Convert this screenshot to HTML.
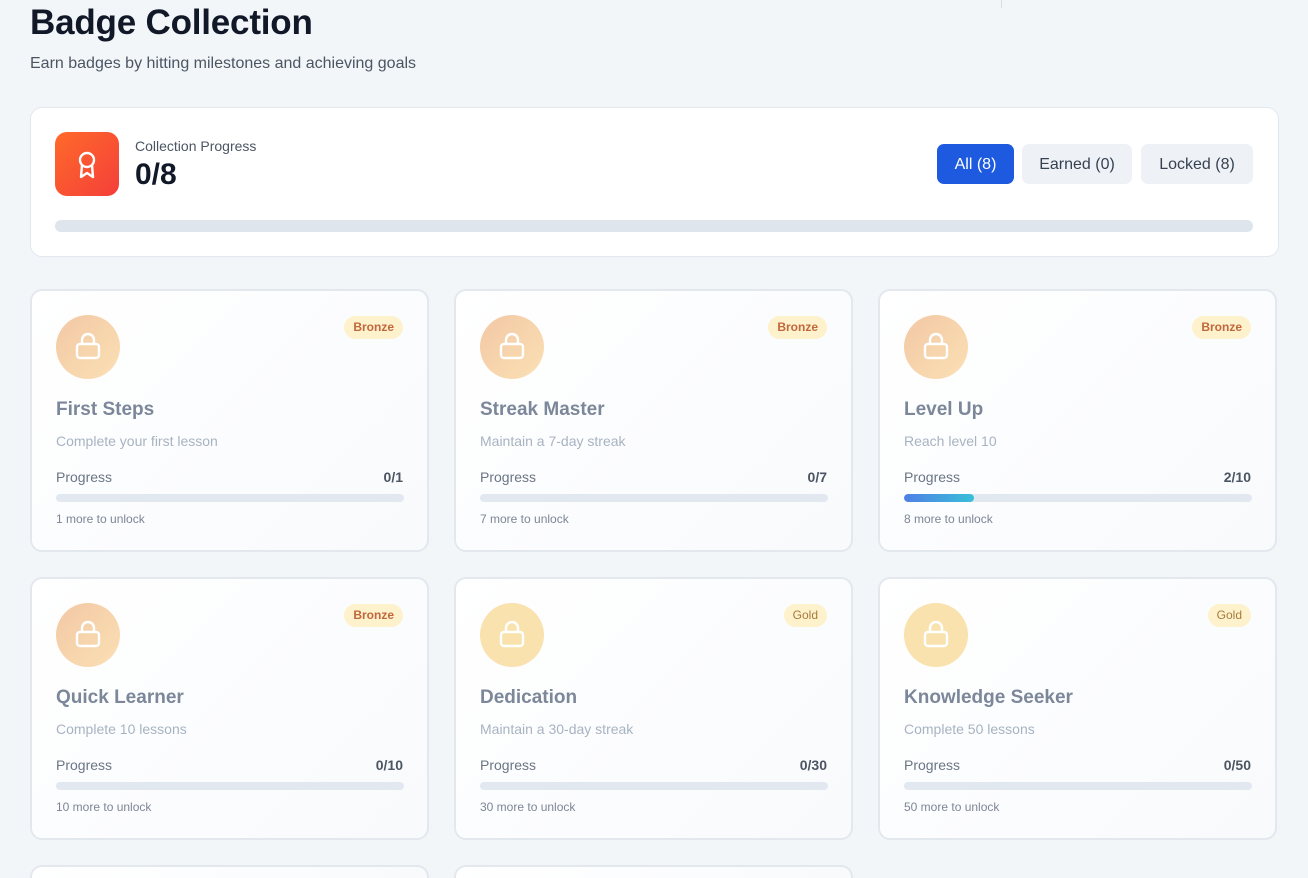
<!DOCTYPE html>
<html style="overflow:hidden;height:878px"><head><meta charset="utf-8"><style>
*{box-sizing:border-box;margin:0;padding:0}
body{width:1308px;height:878px;overflow:hidden;background:#f3f6f9;font-family:"Liberation Sans",sans-serif;position:relative}
h1{position:absolute;left:30px;top:3px;font-size:35px;font-weight:700;color:#111827;letter-spacing:-0.2px}
.sub{position:absolute;left:30px;top:55px;font-size:16px;color:#4b5563}
.vl{position:absolute;left:1001px;top:0;width:1px;height:8px;background:#d9dee5}
.sum{position:absolute;left:30px;top:107px;width:1249px;height:150px;background:#fff;border:1px solid #e2e8f0;border-radius:12px}
.ic{position:absolute;left:24px;top:24px;width:64px;height:64px;border-radius:12px;background:linear-gradient(135deg,#ff6a2a,#f43f3a)}
.cp{position:absolute;left:104px;top:30px;font-size:14px;color:#4b5563}
.num{position:absolute;left:104px;top:50px;font-size:30px;font-weight:700;color:#111827}
.btn{position:absolute;top:36px;height:40px;border-radius:7px;font-size:16px;line-height:42px;text-align:center;color:#374151;background:#eef2f6}
.bar{position:absolute;left:24px;top:112px;width:1198px;height:12px;border-radius:6px;background:#dfe5ec}
.card{position:absolute;width:399px;height:263px;border:2px solid #e3e8ee;border-radius:12px;background:linear-gradient(135deg,#ffffff,#f8fafc)}
.circ{position:absolute;left:24px;top:24px;width:64px;height:64px;border-radius:50%}
.br{background:linear-gradient(135deg,#f2c8a5,#fbe0b4)}
.go{background:#f9e2ad}
.circ svg{position:absolute;left:18px;top:16px}
.pill{position:absolute;right:24px;top:25px;height:23px;line-height:23px;padding:0 9px;border-radius:12px;background:#fdf2cc;font-size:12px;font-weight:700}
.pb{color:#c2673c}.pg{color:#a87a3c;font-weight:400}
.t{position:absolute;left:24px;top:108px;font-size:19px;font-weight:700;color:#7c8799}
.d{position:absolute;left:24px;top:142px;font-size:14px;color:#a8b3c2}
.pl{position:absolute;left:24px;top:178px;font-size:14px;color:#6b7585}
.pr{position:absolute;right:24px;top:178px;font-size:14px;font-weight:700;color:#4b5563}
.pbar{position:absolute;left:24px;top:203px;width:348px;height:8px;border-radius:4px;background:#e2e8f0;overflow:hidden}
.pbar i{display:block;height:8px;border-radius:4px;background:linear-gradient(90deg,#4f7fe6,#38c0d8)}
.m{position:absolute;left:24px;top:221px;font-size:12px;color:#7c8696}
</style></head><body>
<div class="vl"></div>
<h1>Badge Collection</h1>
<div class="sub">Earn badges by hitting milestones and achieving goals</div>
<div class="sum">
<div class="ic"><svg width="64" height="64" viewBox="0 0 64 64" fill="none" stroke="#fff" stroke-width="2.4" stroke-linejoin="round"><circle cx="32" cy="28" r="7"/><path d="M27 33 L26 45 L32 41 L38 45 L37 33"/></svg></div>
<div class="cp">Collection Progress</div>
<div class="num">0/8</div>
<div class="btn" style="left:906px;width:77px;background:#1d5ae0;color:#fff">All (8)</div>
<div class="btn" style="left:991px;width:110px">Earned (0)</div>
<div class="btn" style="left:1110px;width:112px">Locked (8)</div>
<div class="bar"></div>
</div>
<div class="card" style="left:30px;top:289px"><div class="circ br"><svg width="28" height="30" viewBox="0 0 28 30" fill="none" stroke="#fff" stroke-width="2.4"><rect x="3" y="13" width="22" height="14" rx="3"/><path d="M8 13V9a6 6 0 0 1 12 0v4"/></svg></div><div class="pill pb">Bronze</div><div class="t">First Steps</div><div class="d">Complete your first lesson</div><div class="pl">Progress</div><div class="pr">0/1</div><div class="pbar"></div><div class="m">1 more to unlock</div></div>
<div class="card" style="left:454px;top:289px"><div class="circ br"><svg width="28" height="30" viewBox="0 0 28 30" fill="none" stroke="#fff" stroke-width="2.4"><rect x="3" y="13" width="22" height="14" rx="3"/><path d="M8 13V9a6 6 0 0 1 12 0v4"/></svg></div><div class="pill pb">Bronze</div><div class="t">Streak Master</div><div class="d">Maintain a 7-day streak</div><div class="pl">Progress</div><div class="pr">0/7</div><div class="pbar"></div><div class="m">7 more to unlock</div></div>
<div class="card" style="left:878px;top:289px"><div class="circ br"><svg width="28" height="30" viewBox="0 0 28 30" fill="none" stroke="#fff" stroke-width="2.4"><rect x="3" y="13" width="22" height="14" rx="3"/><path d="M8 13V9a6 6 0 0 1 12 0v4"/></svg></div><div class="pill pb">Bronze</div><div class="t">Level Up</div><div class="d">Reach level 10</div><div class="pl">Progress</div><div class="pr">2/10</div><div class="pbar"><i style="width:20%"></i></div><div class="m">8 more to unlock</div></div>
<div class="card" style="left:30px;top:577px"><div class="circ br"><svg width="28" height="30" viewBox="0 0 28 30" fill="none" stroke="#fff" stroke-width="2.4"><rect x="3" y="13" width="22" height="14" rx="3"/><path d="M8 13V9a6 6 0 0 1 12 0v4"/></svg></div><div class="pill pb">Bronze</div><div class="t">Quick Learner</div><div class="d">Complete 10 lessons</div><div class="pl">Progress</div><div class="pr">0/10</div><div class="pbar"></div><div class="m">10 more to unlock</div></div>
<div class="card" style="left:454px;top:577px"><div class="circ go"><svg width="28" height="30" viewBox="0 0 28 30" fill="none" stroke="#fff" stroke-width="2.4"><rect x="3" y="13" width="22" height="14" rx="3"/><path d="M8 13V9a6 6 0 0 1 12 0v4"/></svg></div><div class="pill pg">Gold</div><div class="t">Dedication</div><div class="d">Maintain a 30-day streak</div><div class="pl">Progress</div><div class="pr">0/30</div><div class="pbar"></div><div class="m">30 more to unlock</div></div>
<div class="card" style="left:878px;top:577px"><div class="circ go"><svg width="28" height="30" viewBox="0 0 28 30" fill="none" stroke="#fff" stroke-width="2.4"><rect x="3" y="13" width="22" height="14" rx="3"/><path d="M8 13V9a6 6 0 0 1 12 0v4"/></svg></div><div class="pill pg">Gold</div><div class="t">Knowledge Seeker</div><div class="d">Complete 50 lessons</div><div class="pl">Progress</div><div class="pr">0/50</div><div class="pbar"></div><div class="m">50 more to unlock</div></div>
<div class="card" style="left:30px;top:865px;height:13px;border-bottom:none;border-radius:12px 12px 0 0"></div>
<div class="card" style="left:454px;top:865px;height:13px;border-bottom:none;border-radius:12px 12px 0 0"></div>
</body></html>
